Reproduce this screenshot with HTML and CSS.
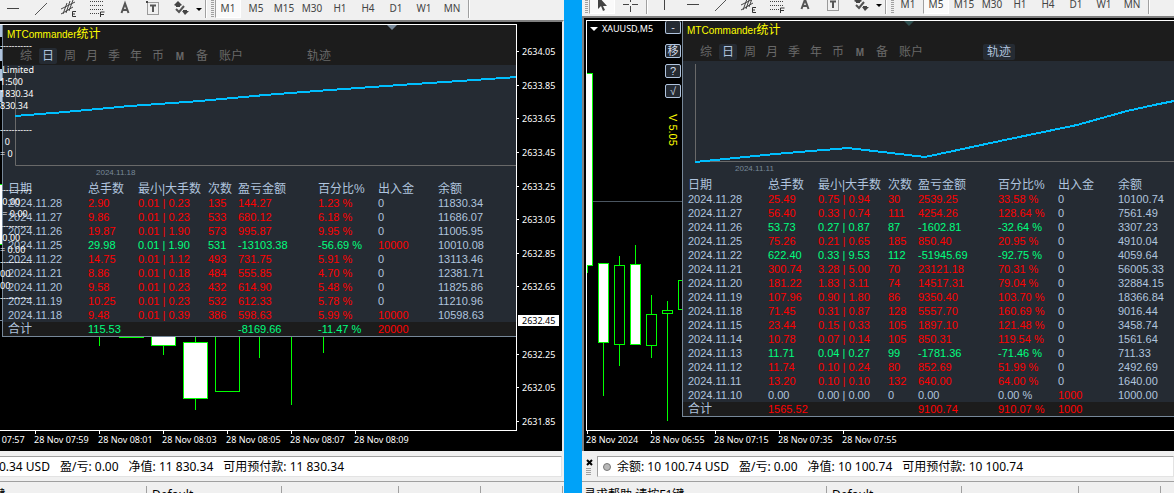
FILE: index.html
```html
<!DOCTYPE html>
<html lang="zh-CN">
<head>
	<meta charset="utf-8">
	<meta name="viewport" content="width=device-width, initial-scale=1.0">
	<title>MTCommander统计</title>
	<link rel="stylesheet" href="styles.css">
</head>
<body>
	<svg class="t-defs" width="0" height="0">
		<symbol id="i-cursor" viewBox="0 0 18 18"><path d="M5 1v13l3-3 2 5 2-1-2-4h4z" fill="#444"/></symbol>
		<symbol id="i-cross" viewBox="0 0 18 18"><path d="M9.500 1v6M9.500 11v6M2 9.500h6M11 9.500h6" stroke="#444" fill="none"/></symbol>
		<symbol id="i-vline" viewBox="0 0 18 18"><path d="M8.500 2v13" stroke="#444"/></symbol>
		<symbol id="i-hline" viewBox="0 0 18 18"><path d="M3 9.500h12" stroke="#444"/></symbol>
		<symbol id="i-trend" viewBox="0 0 18 18"><path d="M3 16L15 4" stroke="#555" fill="none"/></symbol>
		<symbol id="i-channel" viewBox="0 0 18 18"><path d="M1 10L15 3M1 15L13 8M3 15l4-11M6 14l4-12M9 12l4-11" stroke="#444" fill="none"/><path d="M16 12.500h-3.500v5H16M12 15h3" stroke="#333" fill="none"/></symbol>
		<symbol id="i-fibo" viewBox="0 0 18 18"><path d="M2 2.500h14M2 6.500h14M2 10.500h14M2 14.500h9" stroke="#444" stroke-dasharray="1 1" fill="none"/><path d="M12.500 18v-5h4M12 15.500h4" stroke="#333" fill="none"/></symbol>
		<symbol id="i-text" viewBox="0 0 18 18"><path d="M5.500 14L9 4.500 12.500 14M6.500 11h5" stroke="#555" stroke-width="2" fill="none"/></symbol>
		<symbol id="i-label" viewBox="0 0 18 18"><path d="M3.500 3.500h11v12h-11z" stroke="#444" stroke-dasharray="1 1" fill="none"/><path d="M6 6.500h6M9 6v7" stroke="#555" stroke-width="2" fill="none"/><path d="M2 2h2v2H2z" fill="#444"/></symbol>
		<symbol id="i-arrows" viewBox="0 0 18 18"><path d="M2 6l4-4 4 4-2 1v1H4V7zM10 12h1v-1h4v1h2l-4 4z" fill="#444"/><path d="M4 10l3 3 5-6" stroke="#555" stroke-width="2" fill="none"/></symbol>
	</svg>

	<div class="t-desktop">
		<main class="t-window t-window-a">
			<div class="t-toolbar">
				<button class="t-tool" aria-label="水平线"><svg><use href="#i-hline"/></svg></button>
				<button class="t-tool" aria-label="趋势线"><svg><use href="#i-trend"/></svg></button>
				<button class="t-tool" aria-label="通道"><svg><use href="#i-channel"/></svg></button>
				<button class="t-tool" aria-label="斐波那契"><svg><use href="#i-fibo"/></svg></button>
				<button class="t-tool" aria-label="文字"><svg><use href="#i-text"/></svg></button>
				<button class="t-tool" aria-label="标签"><svg><use href="#i-label"/></svg></button>
				<button class="t-tool" aria-label="箭头"><svg><use href="#i-arrows"/></svg></button>
				<button class="t-drop" aria-label="更多"></button>
				<i class="t-sep"></i>
				<i class="t-grip"></i>
				<button class="t-period t-pressed">M1</button>
				<button class="t-period">M5</button>
				<button class="t-period">M15</button>
				<button class="t-period">M30</button>
				<button class="t-period">H1</button>
				<button class="t-period">H4</button>
				<button class="t-period">D1</button>
				<button class="t-period">W1</button>
				<button class="t-period">MN</button>
				<i class="t-sep"></i>
			</div>

			<div class="t-chart">
				<div class="t-plot">
					<svg class="t-candles">
						<path d="M0 0h2v12h-2zM0 24h2v12h-2zM0 44h2v12h-2zM0 65h2v12h-2z" fill="#b0c4de"/>
						<path d="M0 160h2v59h-2z" fill="#fff"/>
						<path d="M0 159.500h2M0 219.500h2" class="c-line"/>
						<path d="M0 295.500h2" stroke="#778899"/>
						<path d="M99.500 300v21M119 312.500h25M163.500 320v10M195.500 300v17M195.500 373v12M259.500 300v33M291.500 300v80M323.500 300v28" class="c-line"/>
						<path d="M151.500 300.500h24v20h-24zM183.500 317.500h24v56h-24z" class="c-bear"/>
						<path d="M215.500 300.500h24v66h-24z" class="c-bull"/>
					</svg>
					<section class="p-panel">
						<header class="p-head">
							<h1 class="p-title">MTCommander<span>统计</span></h1>
							<nav class="p-tabs">
								<button>综</button>
								<button class="p-active">日</button>
								<button>周</button>
								<button>月</button>
								<button>季</button>
								<button>年</button>
								<button>币</button>
								<button><b>M</b></button>
								<button>备</button>
								<button class="p-wide">账户</button>
								<button class="p-wide p-track">轨迹</button>
							</nav>
						</header>
						<svg class="p-graph">
							<path d="M12.500 3v97.500H2000" class="g-axis"/>
							<path d="M12 51L62 47 127 41 197 36 262 30 327 25 397 20 457 16 514 12" class="g-line"/>
							<text x="93" y="110">2024.11.18</text>
						</svg>
						<table class="p-table">
							<colgroup><col class="w-date"><col class="w-lots"><col class="w-size"><col class="w-num"><col class="w-profit"><col class="w-pct"><col class="w-cash"><col></colgroup>
							<thead>
								<tr><th>日期</th><th>总手数</th><th>最小|大手数</th><th>次数</th><th>盈亏金额</th><th>百分比%</th><th>出入金</th><th>余额</th></tr>
							</thead>
							<tbody>
								<tr class="win"><td>2024.11.28</td><td>2.90</td><td>0.01 | 0.23</td><td>135</td><td>144.27</td><td>1.23 %</td><td>0</td><td>11830.34</td></tr>
								<tr class="win"><td>2024.11.27</td><td>9.86</td><td>0.01 | 0.23</td><td>533</td><td>680.12</td><td>6.18 %</td><td>0</td><td>11686.07</td></tr>
								<tr class="win"><td>2024.11.26</td><td>19.87</td><td>0.01 | 1.90</td><td>573</td><td>995.87</td><td>9.95 %</td><td>0</td><td>11005.95</td></tr>
								<tr class="loss"><td>2024.11.25</td><td>29.98</td><td>0.01 | 1.90</td><td>531</td><td>-13103.38</td><td>-56.69 %</td><td class="cash">10000</td><td>10010.08</td></tr>
								<tr class="win"><td>2024.11.22</td><td>14.75</td><td>0.01 | 1.12</td><td>493</td><td>731.75</td><td>5.91 %</td><td>0</td><td>13113.46</td></tr>
								<tr class="win"><td>2024.11.21</td><td>8.86</td><td>0.01 | 0.18</td><td>484</td><td>555.85</td><td>4.70 %</td><td>0</td><td>12381.71</td></tr>
								<tr class="win"><td>2024.11.20</td><td>9.58</td><td>0.01 | 0.23</td><td>432</td><td>614.90</td><td>5.48 %</td><td>0</td><td>11825.86</td></tr>
								<tr class="win"><td>2024.11.19</td><td>10.25</td><td>0.01 | 0.23</td><td>532</td><td>612.33</td><td>5.78 %</td><td>0</td><td>11210.96</td></tr>
								<tr class="win"><td>2024.11.18</td><td>9.48</td><td>0.01 | 0.39</td><td>386</td><td>598.63</td><td>5.99 %</td><td class="cash">10000</td><td>10598.63</td></tr>
							</tbody>
							<tfoot>
								<tr class="loss"><th>合计</th><td>115.53</td><td></td><td></td><td>-8169.66</td><td>-11.47 %</td><td class="cash">20000</td><td></td></tr>
							</tfoot>
						</table>
					</section>
					<i class="t-shift"></i>
					<pre class="t-account">-----------

 Limited
1:500
1830.34
830.34

-----------
  0
= 0


-----------
 0.00
 = 0.00
-----------
 0.00
= 0.00
-----------
00
00
-----------</pre>
				</div>
				<ul class="t-prices">
					<li>2634.05</li>
					<li>2633.85</li>
					<li>2633.65</li>
					<li>2633.45</li>
					<li>2633.25</li>
					<li>2633.05</li>
					<li>2632.85</li>
					<li>2632.65</li>
					<li class="t-current">2632.45</li>
					<li>2632.25</li>
					<li>2632.05</li>
					<li>2631.85</li>
				</ul>
				<ul class="t-times">
					<li>28 Nov 07:57</li>
					<li>28 Nov 07:59</li>
					<li>28 Nov 08:01</li>
					<li>28 Nov 08:03</li>
					<li>28 Nov 08:05</li>
					<li>28 Nov 08:07</li>
					<li>28 Nov 08:09</li>
				</ul>
			</div>

			<div class="t-terminal">
				<div class="t-balance">
					<span>余额: 11 830.34 USD</span>
					<span>盈/亏: 0.00</span>
					<span>净值: 11 830.34</span>
					<span>可用预付款: 11 830.34</span>
				</div>
			</div>
			<footer class="t-status">
				<span class="s-help">寻求帮助,请按F1键</span>
				<span class="s-profile">Default</span>
				<span class="s-cell-a"></span>
				<span class="s-cell-b"></span>
				<span class="s-cell-c"></span>
				<span class="s-rest"></span>
			</footer>
		</main>

		<main class="t-window t-window-b">
			<div class="t-toolbar">
				<i class="t-grip"></i>
				<button class="t-tool t-pressed" aria-label="光标"><svg><use href="#i-cursor"/></svg></button>
				<button class="t-tool" aria-label="十字线"><svg><use href="#i-cross"/></svg></button>
				<i class="t-sep"></i>
				<button class="t-tool" aria-label="垂直线"><svg><use href="#i-vline"/></svg></button>
				<button class="t-tool" aria-label="水平线"><svg><use href="#i-hline"/></svg></button>
				<button class="t-tool" aria-label="趋势线"><svg><use href="#i-trend"/></svg></button>
				<button class="t-tool" aria-label="通道"><svg><use href="#i-channel"/></svg></button>
				<button class="t-tool" aria-label="斐波那契"><svg><use href="#i-fibo"/></svg></button>
				<button class="t-tool" aria-label="文字"><svg><use href="#i-text"/></svg></button>
				<button class="t-tool" aria-label="标签"><svg><use href="#i-label"/></svg></button>
				<button class="t-tool" aria-label="箭头"><svg><use href="#i-arrows"/></svg></button>
				<button class="t-drop" aria-label="更多"></button>
				<i class="t-sep"></i>
				<i class="t-grip"></i>
				<button class="t-period">M1</button>
				<button class="t-period t-pressed">M5</button>
				<button class="t-period">M15</button>
				<button class="t-period">M30</button>
				<button class="t-period">H1</button>
				<button class="t-period">H4</button>
				<button class="t-period">D1</button>
				<button class="t-period">W1</button>
				<button class="t-period">MN</button>
				<i class="t-sep"></i>
			</div>

			<div class="t-chart">
				<div class="t-plot">
					<svg class="t-candles">
						<path d="M0 52h5v192H0z" fill="#fff"/>
						<path d="M0 52.500h5.500v192H0M0.500 244v8" class="c-line"/>
						<path d="M6 180.500h90" stroke="#4a5560"/>
						<path d="M16.500 322v53M32.500 235v110M48.500 224v20M64.500 274v63M80.500 280v120" class="c-line"/>
						<path d="M11.500 242.500h10v79h-10zM43.500 243.500h10v80h-10z" class="c-bear"/>
						<path d="M27.500 244.500h10v79h-10zM59.500 293.500h10v31h-10zM75.500 289.500h10v3h-10zM91.500 259.500h10v29h-10z" class="c-bull"/>
					</svg>
					<div class="t-side">
						<div class="t-symbol">XAUUSD,M5</div>
						<div class="t-keys">
							<button class="t-first">-</button>
							<button>移</button>
							<button>?</button>
							<button>√</button>
							<span class="t-version">V 5.05</span>
						</div>
					</div>
					<section class="p-panel">
						<header class="p-head">
							<h1 class="p-title">MTCommander<span>统计</span></h1>
							<nav class="p-tabs">
								<button>综</button>
								<button class="p-active">日</button>
								<button>周</button>
								<button>月</button>
								<button>季</button>
								<button>年</button>
								<button>币</button>
								<button><b>M</b></button>
								<button>备</button>
								<button class="p-wide">账户</button>
								<button class="p-wide p-track p-active">轨迹</button>
							</nav>
						</header>
						<svg class="p-graph">
							<path d="M12.500 3v97.500H2000" class="g-axis"/>
							<path d="M12 101L92 93 165 87 242 96 317 80 394 64 444 50 471 44 491 40" class="g-line"/>
							<text x="52" y="110">2024.11.11</text>
						</svg>
						<table class="p-table">
							<colgroup><col class="w-date"><col class="w-lots"><col class="w-size"><col class="w-num"><col class="w-profit"><col class="w-pct"><col class="w-cash"><col></colgroup>
							<thead>
								<tr><th>日期</th><th>总手数</th><th>最小|大手数</th><th>次数</th><th>盈亏金额</th><th>百分比%</th><th>出入金</th><th>余额</th></tr>
							</thead>
							<tbody>
								<tr class="win"><td>2024.11.28</td><td>25.49</td><td>0.75 | 0.94</td><td>30</td><td>2539.25</td><td>33.58 %</td><td>0</td><td>10100.74</td></tr>
								<tr class="win"><td>2024.11.27</td><td>56.40</td><td>0.33 | 0.74</td><td>111</td><td>4254.26</td><td>128.64 %</td><td>0</td><td>7561.49</td></tr>
								<tr class="loss"><td>2024.11.26</td><td>53.73</td><td>0.27 | 0.87</td><td>87</td><td>-1602.81</td><td>-32.64 %</td><td>0</td><td>3307.23</td></tr>
								<tr class="win"><td>2024.11.25</td><td>75.26</td><td>0.21 | 0.65</td><td>185</td><td>850.40</td><td>20.95 %</td><td>0</td><td>4910.04</td></tr>
								<tr class="loss"><td>2024.11.22</td><td>622.40</td><td>0.33 | 9.53</td><td>112</td><td>-51945.69</td><td>-92.75 %</td><td>0</td><td>4059.64</td></tr>
								<tr class="win"><td>2024.11.21</td><td>300.74</td><td>3.28 | 5.00</td><td>70</td><td>23121.18</td><td>70.31 %</td><td>0</td><td>56005.33</td></tr>
								<tr class="win"><td>2024.11.20</td><td>181.22</td><td>1.83 | 3.11</td><td>74</td><td>14517.31</td><td>79.04 %</td><td>0</td><td>32884.15</td></tr>
								<tr class="win"><td>2024.11.19</td><td>107.96</td><td>0.90 | 1.80</td><td>86</td><td>9350.40</td><td>103.70 %</td><td>0</td><td>18366.84</td></tr>
								<tr class="win"><td>2024.11.18</td><td>71.45</td><td>0.31 | 0.87</td><td>128</td><td>5557.70</td><td>160.69 %</td><td>0</td><td>9016.44</td></tr>
								<tr class="win"><td>2024.11.15</td><td>23.44</td><td>0.15 | 0.33</td><td>105</td><td>1897.10</td><td>121.48 %</td><td>0</td><td>3458.74</td></tr>
								<tr class="win"><td>2024.11.14</td><td>10.78</td><td>0.07 | 0.14</td><td>105</td><td>850.31</td><td>119.54 %</td><td>0</td><td>1561.64</td></tr>
								<tr class="loss"><td>2024.11.13</td><td>11.71</td><td>0.04 | 0.27</td><td>99</td><td>-1781.36</td><td>-71.46 %</td><td>0</td><td>711.33</td></tr>
								<tr class="win"><td>2024.11.12</td><td>11.74</td><td>0.10 | 0.24</td><td>80</td><td>852.69</td><td>51.99 %</td><td>0</td><td>2492.69</td></tr>
								<tr class="win"><td>2024.11.11</td><td>13.20</td><td>0.10 | 0.10</td><td>132</td><td>640.00</td><td>64.00 %</td><td>0</td><td>1640.00</td></tr>
								<tr><td>2024.11.10</td><td>0.00</td><td>0.00 | 0.00</td><td>0</td><td>0.00</td><td>0.00 %</td><td class="cash">1000</td><td>1000.00</td></tr>
							</tbody>
							<tfoot>
								<tr class="win"><th>合计</th><td>1565.52</td><td></td><td></td><td>9100.74</td><td>910.07 %</td><td class="cash">1000</td><td></td></tr>
							</tfoot>
						</table>
					</section>
					<i class="t-shift"></i>
				</div>
				<ul class="t-times">
					<li>28 Nov 2024</li>
					<li>28 Nov 06:55</li>
					<li>28 Nov 07:15</li>
					<li>28 Nov 07:35</li>
					<li>28 Nov 07:55</li>
				</ul>
			</div>

			<div class="t-terminal">
				<div class="t-handle">
					<button aria-label="关闭"><svg width="7" height="7"><path d="M1 1l5 5M6 1L1 6" stroke="#000" stroke-width="2"/></svg></button>
					<i></i>
				</div>
				<div class="t-balance">
					<i class="t-dot"></i>
					<span>余额: 10 100.74 USD</span>
					<span>盈/亏: 0.00</span>
					<span>净值: 10 100.74</span>
					<span>可用预付款: 10 100.74</span>
				</div>
			</div>
			<footer class="t-status">
				<span class="s-help">寻求帮助,请按F1键</span>
				<span class="s-profile">Default</span>
				<span class="s-cell-a"></span>
				<span class="s-cell-c"></span>
				<span class="s-rest"></span>
			</footer>
		</main>
	</div>
</body>
</html>
```
FILE: styles.css
```css
* {
	box-sizing: border-box;
}

body {
	margin: 0;
	background-color: #00a2f8;
	font-family: "Noto Sans", "Noto Sans CJK SC", sans-serif;
	font-size: 12px;
	overflow: hidden;
}

button {
	margin: 0;
	padding: 0;
	border: 0;
	background: none;
	font: inherit;
	color: inherit;
}

ul {
	margin: 0;
	padding: 0;
	list-style: none;
}

.t-defs {
	position: absolute;
}

.t-desktop {
	display: grid;
	grid-template-columns: minmax(0, 564fr) minmax(0, 592fr);
	gap: 18px;
	height: 100vh;
}

.t-window {
	display: flex;
	flex-direction: column;
	min-width: 0;
	background-color: #f0f0f0;
	overflow: hidden;
}

/*Toolbar*/

.t-toolbar {
	flex: none;
	display: flex;
	align-items: flex-end;
	height: 20px;
	padding-bottom: 2px;
	background-color: #f0f0f0;
	overflow: hidden;
}

.t-window-a .t-toolbar {
	margin-left: -1px;
}

.t-window-b .t-toolbar {
	height: 16px;
	padding-left: 2px;
}

.t-tool,
.t-period {
	flex: none;
	display: flex;
	align-items: center;
	justify-content: center;
	width: 28px;
	height: 20px;
	color: #444;
	font-size: 10px;
	line-height: 20px;
}

.t-tool svg {
	flex: none;
	width: 18px;
	height: 18px;
}

.t-pressed {
	width: 26px;
	margin: 0 1px;
	background-color: #fafafa;
	border: 1px solid #a0a0a0;
	border-right-color: #fff;
	border-bottom-color: #fff;
}

.t-drop {
	flex: none;
	width: 8px;
	height: 18px;
}

.t-drop::before {
	content: '';
	display: block;
	width: 0;
	margin: 0 auto;
	border: 3px solid transparent;
	border-top-color: #000;
	border-bottom: 0;
}

.t-sep {
	flex: none;
	width: 2px;
	height: 32px;
	margin: 0 1px 0 2px;
	border-left: 1px solid #a0a0a0;
	border-right: 1px solid #fff;
}

.t-tool + .t-sep {
	margin-right: 3px;
}

.t-grip {
	flex: none;
	width: 3px;
	height: 18px;
	margin-left: 1px;
	background: repeating-linear-gradient(#a0a0a0 0 1px, #f0f0f0 1px 2px);
}

.t-sep + .t-grip {
	margin-left: 3px;
}

/*Chart*/

.t-chart {
	flex: 1 1 0;
	min-height: 0;
	display: grid;
	grid-template-columns: minmax(0, 1fr);
	grid-template-rows: minmax(0, 1fr) 20px;
	padding-top: 2px;
	border-top: 2px solid #808080;
	background-color: #000;
	color: #fff;
	font-family: "Noto Sans", sans-serif;
	font-size: 9px;
}

.t-window-a .t-chart {
	grid-template-columns: minmax(0, 1fr) 45px;
	border-right: 2px solid #e8e8e8;
}

.t-window-b .t-chart {
	padding-left: 2px;
	border-left: 2px solid #808080;
}

.t-plot {
	position: relative;
	display: grid;
	grid-template-columns: minmax(0, 1fr);
	align-items: start;
	border-top: 1px solid #fff;
	border-bottom: 1px solid #fff;
	overflow: hidden;
}

.t-window-a .t-plot {
	border-right: 1px solid #fff;
}

.t-window-b .t-plot {
	grid-template-columns: 95px minmax(0, 1fr);
	border-left: 1px solid #fff;
}

.t-candles {
	grid-area: 1 / 1 / 2 / -1;
	width: 100%;
	height: 100%;
	min-height: 405px;
	shape-rendering: crispEdges;
}

.c-line {
	fill: none;
	stroke: #0f0;
}

.c-bear {
	fill: #fff;
	stroke: #0f0;
}

.c-bull {
	fill: #000;
	stroke: #0f0;
}

.t-prices {
	grid-row: 1 / 3;
	grid-column: 2;
	display: flex;
	flex-direction: column;
	justify-content: space-between;
	padding: 22px 0 24px;
}

.t-prices li {
	display: flex;
	align-items: center;
	gap: 3px;
	height: 11px;
	line-height: 11px;
}

.t-prices li::before {
	content: '';
	width: 2px;
	height: 1px;
	background-color: #fff;
}

.t-prices .t-current {
	margin: 0 3px 0 1px;
	padding-left: 1px;
	gap: 1px;
	background-color: #fff;
	color: #000;
}

.t-times {
	grid-row: 2;
	grid-column: 1;
	display: flex;
	min-width: 0;
	overflow: hidden;
	white-space: nowrap;
}

.t-times li {
	flex: none;
	width: 64px;
	line-height: 12px;
}

.t-times li::before {
	content: '';
	display: block;
	width: 1px;
	height: 3px;
	margin-left: 1px;
	background-color: #fff;
}

.t-window-a .t-times li:first-child {
	margin-left: -30px;
}

.t-account {
	position: absolute;
	left: 0;
	top: 15px;
	margin: 0;
	font-family: "Noto Sans", sans-serif;
	font-size: 9px;
	line-height: 12px;
}

.t-shift {
	position: absolute;
	left: 387px;
	top: 0;
	border: 5px solid transparent;
	border-top-color: #778899;
	border-bottom: 0;
}

.t-window-b .t-shift {
	left: 317px;
	border-top-color: #2f4f4f;
}

.t-side {
	grid-area: 1 / 1;
	display: flex;
	justify-content: space-between;
	padding: 0 1px 0 3px;
}

.t-symbol {
	display: flex;
	align-items: center;
	gap: 4px;
	height: 15px;
}

.t-symbol::before {
	content: '';
	border: 4px solid transparent;
	border-top-color: #fff;
	border-bottom: 0;
}

.t-keys {
	display: flex;
	flex-direction: column;
	align-items: center;
	gap: 6px;
	width: 16px;
}

.t-keys button {
	width: 16px;
	height: 14px;
	border: 1px solid #b0c4de;
	border-radius: 2px;
	background-color: #252b33;
	color: #d3dce8;
	font-family: "Liberation Sans", "Noto Sans CJK SC", sans-serif;
	font-size: 11px;
	line-height: 12px;
}

.t-keys .t-first {
	height: 13px;
	margin-bottom: 4px;
	border-top: 0;
}

.t-version {
	margin-top: 10px;
	writing-mode: vertical-rl;
	color: #ff0;
	font-family: "Liberation Sans", sans-serif;
	font-size: 11px;
	line-height: 12px;
}

/*Statistics panel*/

.p-panel {
	grid-area: 1 / 1;
	margin-left: 2px;
	border-left: 1px solid #778899;
	border-bottom: 1px solid #778899;
	background-color: #252b33;
	color: #b0c4de;
	font-family: "Liberation Sans", "Noto Sans CJK SC", sans-serif;
	font-size: 11px;
}

.t-window-b .p-panel {
	grid-area: 1 / 2;
	margin-left: 0;
}

.p-head {
	height: 40px;
	background-color: #1c1c1c;
}

.p-title {
	margin: 0;
	padding: 1px 0 0 4px;
	height: 23px;
	color: #ff0;
	font-size: 10px;
	font-weight: normal;
	line-height: 16px;
}

.p-title span {
	font-size: 12px;
}

.p-tabs {
	display: flex;
	gap: 4px;
	padding-left: 14px;
}

.p-tabs button {
	width: 18px;
	height: 16px;
	border-radius: 2px;
	color: #696969;
	font-size: 12px;
	line-height: 16px;
	white-space: nowrap;
}

.p-tabs b {
	font-size: 10px;
}

.p-tabs .p-wide {
	width: 32px;
}

.p-tabs .p-track {
	margin-left: 52px;
}

.p-tabs .p-active {
	background-color: #252b33;
	color: #b0c4de;
}

.p-graph {
	display: block;
	width: 100%;
	height: 116px;
}

.p-graph text {
	fill: #778899;
	font-family: "Liberation Sans", sans-serif;
	font-size: 8px;
}

.g-axis {
	fill: none;
	stroke: #696969;
}

.g-line {
	fill: none;
	stroke: #00bfff;
	stroke-width: 2;
	shape-rendering: crispEdges;
}

.p-table {
	width: 100%;
	table-layout: fixed;
	border-collapse: collapse;
	white-space: nowrap;
}

.w-date { width: 80px; }
.w-lots { width: 50px; }
.w-size { width: 70px; }
.w-num { width: 30px; }
.w-profit { width: 80px; }
.w-pct { width: 60px; }
.w-cash { width: 60px; }

.p-table th,
.p-table td {
	height: 14px;
	padding: 0 0 0 5px;
	line-height: 14px;
	text-align: left;
	font-weight: normal;
}

.p-table th {
	font-size: 12px;
}

.p-table thead th {
	height: 15px;
}

.p-table tfoot {
	background-color: #1c1c1c;
}

.p-table .win td:nth-child(n+2):nth-child(-n+6),
.p-table .cash {
	color: #f00;
}

.p-table .loss td:nth-child(n+2):nth-child(-n+6) {
	color: #00ff7f;
}

/*Terminal and status bar*/

.t-terminal {
	flex: none;
	display: flex;
	height: 30px;
	padding: 5px 0 4px;
}

.t-window-a .t-terminal {
	padding-right: 2px;
}

.t-balance {
	flex: 1 1 0;
	min-width: 0;
	display: flex;
	align-items: center;
	gap: 10px;
	border: 1px solid #a0a0a0;
	border-right-color: #e3e3e3;
	border-bottom-color: #e3e3e3;
	background-color: #fff;
	color: #000;
	line-height: 16px;
	white-space: nowrap;
	overflow: hidden;
}

.t-balance span {
	flex: none;
}

.t-window-a .t-balance {
	border-left: 0;
}

.t-window-a .t-balance span:first-child {
	margin-left: -62px;
}

.t-dot {
	flex: none;
	width: 8px;
	height: 8px;
	margin: 0 -4px 0 5px;
	border: 1px solid #777;
	border-radius: 50%;
	background-color: #b8b8b8;
}

.t-handle {
	width: 15px;
	padding-left: 4px;
}

.t-handle button {
	display: block;
	height: 12px;
}

.t-handle button svg {
	display: block;
}

.t-handle i {
	display: block;
	width: 5px;
	height: 8px;
	background: repeating-linear-gradient(#a0a0a0 0 1px, #f0f0f0 1px 2px);
}

.t-status {
	flex: none;
	display: flex;
	height: 12px;
	padding-top: 4px;
	border-top: 1px solid #a0a0a0;
	color: #000;
	line-height: 17px;
	white-space: nowrap;
	overflow: hidden;
}

.t-status span {
	flex: none;
	border-right: 1px solid #a0a0a0;
}

.s-help {
	width: 245px;
	padding-left: 2px;
}

.t-window-a .s-help {
	width: 244px;
	margin-left: -97px;
}

.s-profile {
	width: 135px;
	padding-left: 5px;
}

.s-cell-a {
	width: 117px;
}

.s-cell-b,
.s-cell-c {
	width: 82px;
}

.t-status .s-cell-c + .s-rest {
	flex: 1 1 0;
	border-right: 0;
}
```
